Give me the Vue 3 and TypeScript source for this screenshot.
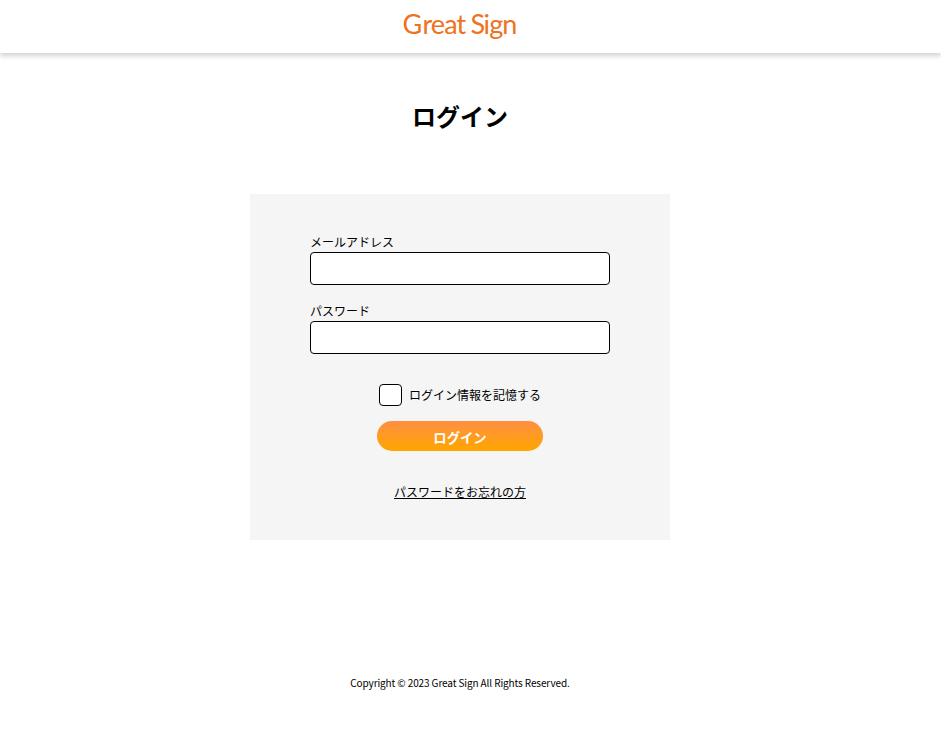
<script setup lang="ts">
import { ref } from 'vue'

const email = ref<string>('')
const password = ref<string>('')
const remember = ref<boolean>(false)
</script>

<template>
  <div class="page">
    <header class="header">
      <svg class="logo" width="120" height="42" viewBox="0 0 120 42" role="img">
        <text y="29" x="2.6 22.4 30.8 44.2 56.6 64 70.6 83.6 89.2 102.2">Great Sign</text>
      </svg>
    </header>
    <main class="main">
      <h1 class="title">ログイン</h1>
      <form class="panel" @submit.prevent>
        <label class="field">
          <span class="label">メールアドレス</span>
          <input v-model="email" class="input" type="text" />
        </label>
        <label class="field">
          <span class="label">パスワード</span>
          <input v-model="password" class="input" type="password" />
        </label>
        <label class="remember">
          <input v-model="remember" class="check" type="checkbox" />
          <span>ログイン情報を記憶する</span>
        </label>
        <button class="submit" type="submit">ログイン</button>
        <a class="forgot" href="#">パスワードをお忘れの方</a>
      </form>
    </main>
    <footer class="footer">Copyright © 2023 Great Sign All Rights Reserved.</footer>
  </div>
</template>

<style>
body {
  background: #fff;
  overflow: hidden;
}
</style>

<style scoped>
.page {
  height: 746px;
  color: #000;
  font-family: "Noto Sans CJK JP", sans-serif;
  font-size: 12px;
  line-height: 18px;
}
.page * {
  box-sizing: border-box;
}
.header {
  display: flex;
  justify-content: center;
  height: 53px;
  padding: 5px 21px 0 0;
  box-shadow: 0 3px 5px rgba(0, 0, 0, 0.18);
}
.logo {
  display: block;
}
.logo text {
  font-family: Lato, sans-serif;
  font-size: 27px;
  font-weight: 400;
  fill: #ee7220;
}
.main {
  display: flex;
  flex-direction: column;
  align-items: center;
  width: 920px;
}
.title {
  margin: 45px 0 60px;
  font-size: 24px;
  font-weight: 700;
  line-height: 36px;
}
.panel {
  display: flex;
  flex-direction: column;
  align-items: center;
  width: 420px;
  height: 346px;
  padding: 39px 60px 0;
  background: #f5f5f5;
}
.field {
  display: flex;
  flex-direction: column;
  gap: 1px;
  width: 300px;
  margin-bottom: 17px;
}
.input {
  width: 300px;
  height: 33px;
  margin: 0;
  padding: 0 8px;
  border: 1px solid #000;
  border-radius: 4px;
  background: #fff;
  font: inherit;
  outline: none;
}
.remember {
  display: flex;
  align-items: center;
  gap: 7px;
  height: 22px;
  margin-top: 13px;
}
.check {
  appearance: none;
  width: 23px;
  height: 22px;
  margin: 0;
  border: 1px solid #000;
  border-radius: 4px;
  background: #fff;
}
.check:checked {
  background: #ff9d1c;
}
.submit {
  width: 165.4px;
  height: 30px;
  margin: 15px 0 0;
  padding: 4px 0 0;
  border: 0;
  border-radius: 15px;
  background: linear-gradient(#ff8f43, #ffa600);
  color: #fff;
  font-family: inherit;
  font-size: 13.333px;
  font-weight: 700;
  line-height: 20px;
}
.forgot {
  margin-top: 32px;
  color: #000;
  text-decoration: underline;
}
.footer {
  width: 920px;
  margin-top: 135px;
  font-size: 10px;
  letter-spacing: -0.11px;
  line-height: 15px;
  text-align: center;
}
</style>
